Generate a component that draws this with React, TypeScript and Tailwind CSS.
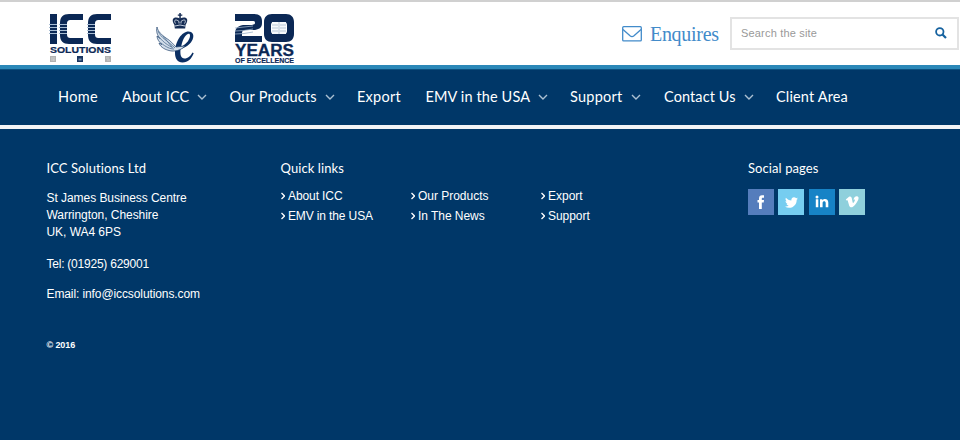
import React from "react";
import { FaTwitter } from "react-icons/fa";

const navItems = [
  { label: "Home", width: "w-[64px]", text: "tracking-[0.3px]", menu: false },
  { label: "About ICC", width: "w-[107.5px]", text: "tracking-[0.1px]", menu: true },
  { label: "Our Products", width: "w-[127.5px]", text: "tracking-[0.22px]", menu: true },
  { label: "Export", width: "w-[68.5px]", text: "tracking-[0.25px]", menu: false },
  { label: "EMV in the USA", width: "w-[144.5px]", text: "tracking-[0.12px]", menu: true },
  { label: "Support", width: "w-[94px]", text: "tracking-[0.25px]", menu: true },
  { label: "Contact Us", width: "w-[112px]", text: "tracking-[0.1px]", menu: true },
  { label: "Client Area", width: "w-[90px]", text: "tracking-[0.15px]", menu: false },
];

const quickLinks = [
  { label: "About ICC", text: "tracking-[-0.1px]" },
  { label: "Our Products", text: "tracking-[-0.02px]" },
  { label: "Export", text: "tracking-[0px]" },
  { label: "EMV in the USA", text: "tracking-[-0.13px]" },
  { label: "In The News", text: "tracking-[-0.05px]" },
  { label: "Support", text: "tracking-[-0.05px]" },
];

const social = [
  {
    name: "Facebook",
    color: "bg-[#557dbc]",
    icon: (
      <svg width="14" height="14" viewBox="0 0 14 14" fill="white">
        <path d="M5 14V7.500H3.500V5H5V3.500C5 1.200 6.200.3 8 .3h2v2.500H8.700c-.7 0-.9.400-.9 1V5H10l-.3 2.500H7.800V14z" />
      </svg>
    ),
  },
  { name: "Twitter", color: "bg-[#76cdf0]", icon: <FaTwitter size={13} /> },
  {
    name: "LinkedIn",
    color: "bg-[#1783c6]",
    icon: (
      <svg width="14" height="14" viewBox="0 0 14 14" fill="white">
        <circle cx="2" cy="2" r="1.500" />
        <path d="M.8 4.300h2.500v8H.8zM5 4.300h2.400v1c1.600-2 5.900-1.700 5.900 2.200v4.800h-2.600V8c0-2.400-3.100-2.200-3.100 0v4.300H5z" />
      </svg>
    ),
  },
  {
    name: "Vimeo",
    color: "bg-[#8fd0dc]",
    icon: (
      <svg width="14" height="14" viewBox="0 0 14 14" fill="white">
        <path d="M.8 4.500 4 1.800c1.500-1 2.500 0 2.800 1.500l.8 4c.3.900.8.700 1.300 0 1-1.600 1.300-2.400.7-2.700-.4-.2-.9 0-1.200.1C9 2 10.600 1 12 1.200c3.400.7.700 5.300-1.500 8-2.200 2.800-4.800 4.400-6.200 1.800L2.600 5.300c-.2-.4-.6 0-1 .3z" />
      </svg>
    ),
  },
];

function IccLogo() {
  return (
    <svg width="64" height="52" viewBox="0 0 64 52" className="shrink-0">
      <g fill="#0b2855">
        <path d="M1 1h7v30H1z" />
        <path d="M34 1H20c-6 0-9 3-9 9v12c0 6 3 9 9 9h14v-6H22c-3 0-4-1-4-4V11c0-3 1-4 4-4h12z" />
        <path d="M62 1H48c-6 0-9 3-9 9v12c0 6 3 9 9 9h14v-6H50c-3 0-4-1-4-4V11c0-3 1-4 4-4h12z" />
      </g>
      <path d="M0 11.500h8M0 14.500h8M0 17.500h8M0 20.500h8M10 11.500h8M10 14.500h8M10 17.500h8M10 20.500h8M38 11.500h8M38 14.500h8M38 17.500h8M38 20.500h8" stroke="#a8bdd3" strokeWidth="1.200" />
      <text x="1" y="40.300" textLength="61" lengthAdjust="spacingAndGlyphs" fill="#0b2855" stroke="#0b2855" strokeWidth=".2" className="font-['Liberation_Sans'] text-[9.500px] font-bold">SOLUTIONS</text>
      <path d="M1 43h6v6H1zM56 43h6v6h-6z" fill="#b2b2b2" />
      <path d="M28 43h6v6h-6z" fill="#183561" />
      <path d="M2 45h2M2 47h3M5 44v4M57 45h3M58 47h3" stroke="#ddd" strokeWidth=".7" />
      <path d="M29.500 45.500h3v2h-3z" fill="#7890ae" />
    </svg>
  );
}

function QueensAward() {
  return (
    <svg width="44" height="52" viewBox="0 0 44 52" className="shrink-0">
      <g fill="#152c54">
        <path d="M19.500 12C15 5 20 3 25 5.500 30 3 35 5 30.500 12l-.3 3.500H19.800z" />
        <path d="M24.300 0h1.500v1.500h1.500v1.300h-1.500V6h-1.500V2.800h-1.500V1.500h1.500z" />
      </g>
      <path d="M20.500 10.500c-2.500-4 1-4.500 3.500-2v2M29.500 10.500c2.500-4-1-4.500-3.500-2v2M20 13q5-2 10 0" fill="none" stroke="#c5cfdd" strokeWidth="1" />
      <path fill="#0b2f63" fillRule="evenodd" d="M20 40C20 28 27 18.500 33.500 18.500c8 0 6 12-5 16.500l-3 1c-.5 6 .5 9.500 4 9.500 3.500 0 6-2.500 8-6l1.200.8C36.500 46 33 49.500 27.500 49.500c-5 0-7.500-4-7.500-9.500zm6.200-6.500C32 31 35 26 35 22.500c0-4-6.500-1-8.800 11z" />
      <path fill="#d3deea" stroke="#24456f" strokeWidth=".7" d="M2 14c1 5 5 8 9 11 5 3 7 6 10 9l9-1c-4 4.500-11 6-16 4.500C8 36 5 33 4 30l3 1.500C4 29 2 26 2 23l3 2.500C2 22 1 18 2 14z" />
      <path d="M3 18c3 7 10 10 17 17M4 24c5 6 9 8 14 11M6 30c5 4 9 6 13 6M8 23l9 11" fill="none" stroke="#5a7899" strokeWidth=".9" />
    </svg>
  );
}

function TwentyYears() {
  return (
    <svg width="64" height="52" viewBox="0 0 64 52" className="shrink-0">
      <g fill="#0b2855">
        <path d="M1 1h19c6 0 8 3 8 7v2c0 4-2 6-7 7H11c-2 .5-3 1-3 3v3h20v6H1v-8c0-5 2-8 8-9h9c2-.5 3-1 3-2 0-2-1-2-3-2H1z" />
        <path fillRule="evenodd" d="M38 1h14c5 0 8 3 8 8v12c0 5-3 8-8 8H38c-5 0-8-3-8-8V9c0-5 3-8 8-8zm2 8c-2 0-3 1-3 3v6c0 2 1 3 3 3h10c2 0 3-1 3-3v-6c0-2-1-3-3-3z" />
        <text x="1" y="42.500" textLength="59" lengthAdjust="spacingAndGlyphs" stroke="#0b2855" strokeWidth=".3" className="font-['Liberation_Sans'] text-[16px] font-bold">YEARS</text>
        <text x="1" y="50" textLength="59" lengthAdjust="spacingAndGlyphs" stroke="#0b2855" strokeWidth=".15" className="font-['Liberation_Sans'] text-[7px] font-bold">OF EXCELLENCE</text>
      </g>
      <path d="M1 15q9-1 18-2M1 18q9 0 18-2M1 21q9 0 18-2" fill="none" stroke="#9db2ca" strokeWidth=".8" />
      <path fill="#f6f9fc" d="M38 9h14v12H38z" />
      <path d="M38 12h6M46 12h6M38 15h6M46 15h6M38 18h6M46 18h6M45 9v12" stroke="#b9c8d8" strokeWidth="1" />
    </svg>
  );
}

function Down() {
  return (
    <svg width="10" height="6" viewBox="0 0 10 6" fill="none" className="shrink-0">
      <path d="m1 1 4 4 4-4" stroke="#abc0d2" strokeWidth="1.400" />
    </svg>
  );
}

function Heading({ children }: { children: React.ReactNode }) {
  return <h4 className="font-['Lato',sans-serif] text-[13px] leading-[16px] tracking-[0.08px]">{children}</h4>;
}

export default function App() {
  return (
    <div className="flex h-[440px] w-[960px] flex-col overflow-hidden bg-[#003768] font-['Liberation_Sans',Arial,sans-serif] text-white">
      <header className="flex h-[65px] shrink-0 border-t-2 border-[#d0d0d0] bg-white">
        <div className="flex pt-[11px] pl-[49px]">
          <IccLogo />
          <div className="ml-[42px]"><QueensAward /></div>
          <div className="ml-[35px]"><TwentyYears /></div>
        </div>
        <div className="ml-auto flex items-start pt-[15px] pr-[1px]">
          <a className="mr-[12px] flex items-center pt-[4px] text-[#428bca]">
            <svg width="20" height="16" viewBox="0 0 20 16" fill="none" stroke="#428bca" strokeWidth="1.300" className="mr-[8px]">
              <rect x=".7" y=".7" width="18.600" height="14.200" rx="1" />
              <path d="M1 3.500 8 9.800c1.500 1.200 2.500 1.200 4 0l7-6.300" />
            </svg>
            <span className="w-[68px] font-['Liberation_Serif',serif] text-[20px] leading-[26px] tracking-[-0.3px] whitespace-nowrap">Enquires</span>
          </a>
          <div className="flex h-[33px] w-[229px] items-center justify-between border-2 border-[#e3e3e3] pr-[10px] pl-[9px]">
            <span className="text-[11px] tracking-[0.18px] text-[#999]">Search the site</span>
            <svg width="12" height="12" viewBox="0 0 12 12" fill="none" stroke="#16629f" className="mb-[2px]">
              <circle cx="4.800" cy="4.800" r="3.700" strokeWidth="1.800" />
              <path d="m7.500 7.500 3.500 3.500" strokeWidth="2.200" />
            </svg>
          </div>
        </div>
      </header>
      <nav className="flex h-[60px] shrink-0 border-t-4 border-[#2b88b8] pl-[58px] font-['Lato',sans-serif] text-[14.5px] shadow-[inset_0_1px_0_#0b5080]">
        {navItems.map((item) => (
          <a key={item.label} className={`flex h-[55px] shrink-0 items-center gap-[8px] whitespace-nowrap ${item.width}`}>
            <span className={item.text}>{item.label}</span>
            {item.menu && <Down />}
          </a>
        ))}
      </nav>
      <div className="h-[4px] shrink-0 bg-[#f2f4f6]" />
      <footer className="flex pt-[31px] pl-[46.5px] text-[12px]">
        <section className="w-[234px]">
          <Heading>ICC Solutions Ltd</Heading>
          <p className="mt-[14px] leading-[17px] tracking-[-0.05px]">St James Business Centre<br />Warrington, Cheshire<br />UK, WA4 6PS</p>
          <p className="mt-[15px] leading-[17px] tracking-[-0.23px]">Tel: (01925) 629001</p>
          <p className="mt-[13px] leading-[17px] tracking-[-0.1px]">Email: info@iccsolutions.com</p>
          <p className="mt-[35px] text-[9px] leading-[14px] font-bold tracking-[-0.1px]">© 2016</p>
        </section>
        <section className="w-[467.5px]">
          <Heading>Quick links</Heading>
          <ul className="mt-[10px] grid grid-cols-[130px_130px_130px] leading-[20px]">
            {quickLinks.map((link) => (
              <li key={link.label} className={`flex items-center gap-[3px] whitespace-nowrap ${link.text}`}>
                <svg width="4.500" height="8" viewBox="0 0 4.5 8" fill="none"><path d="m.5 1 3 3-3 3" stroke="white" strokeWidth="1.300" /></svg>
                {link.label}
              </li>
            ))}
          </ul>
        </section>
        <section>
          <Heading>Social pages</Heading>
          <div className="mt-[13px] flex gap-[4.330px]">
            {social.map((item) => (
              <a key={item.name} aria-label={item.name} className={`flex size-[26px] items-center justify-center ${item.color}`}>{item.icon}</a>
            ))}
          </div>
        </section>
      </footer>
    </div>
  );
}
